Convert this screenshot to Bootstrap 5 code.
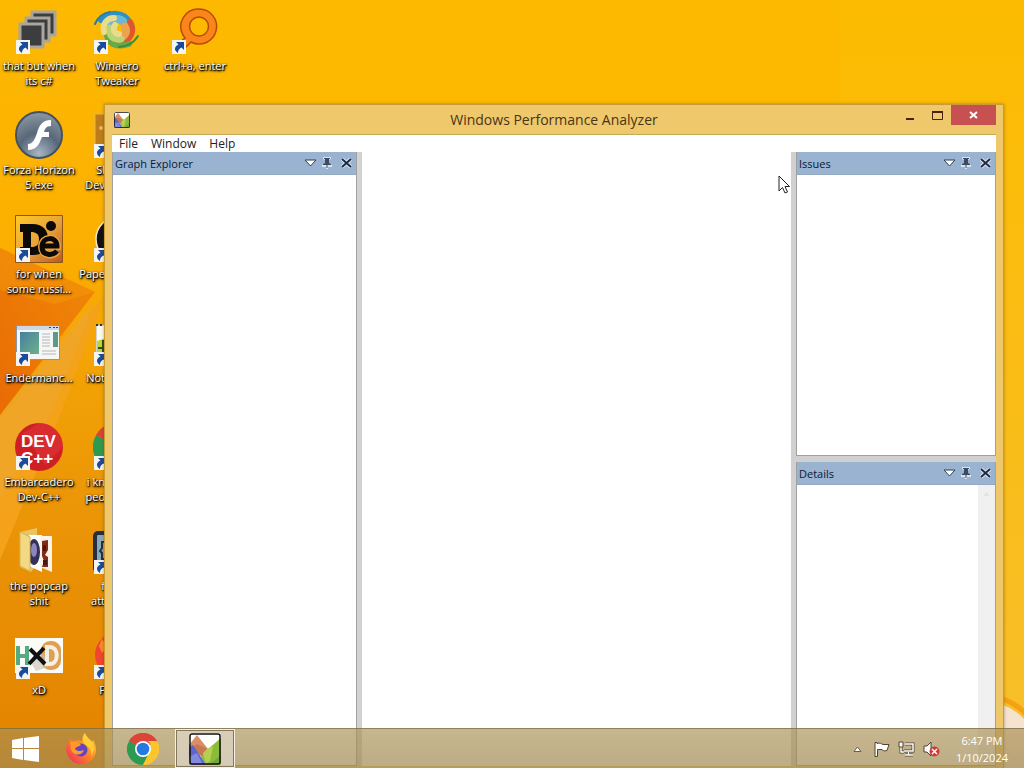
<!DOCTYPE html>
<html lang="en">
<head>
<meta charset="utf-8">
<meta name="viewport" content="width=device-width, initial-scale=1">
<title>Windows Performance Analyzer</title>
<link href="https://cdn.jsdelivr.net/npm/bootstrap@5.3.0/dist/css/bootstrap.min.css" rel="stylesheet">
<style>
  body { font-family: "Open Sans", "Noto Sans", sans-serif; font-size: 11px; line-height: 15px; color: #222; }
  .desktop { background: #ffb900; isolation: isolate; }
  .wallpaper { z-index: -1; }
  .icon-column { width: 78px; }
  .shortcut { height: 104px; padding-top: 7px; gap: 3px; color: #fff; white-space: nowrap; text-shadow: 1px 1px 1px #000, 0 1px 2px #000, 1px 1px 3px #000; }
  .shortcut:hover { color: #fff; }
  .shortcut svg { width: 48px; height: 48px; flex: none; }
  .tucked { width: 27px; overflow: hidden; text-align: right; }
  .tucked svg { margin-left: 15px; }
  .app-window { left: 104px; right: 20px; top: 104px; bottom: 0; background: #efc86c; padding: 0 7px 2px; border: 1px solid #c99a35; border-width: 1px 1px 0; box-shadow: 0 0 3px rgba(90,60,0,.45); }
  .title-bar { height: 29px; }
  .title-text { font-size: 14px; color: #4b3517; }
  .caption-btn { width: 27px; height: 20px; }
  .plain { border: 0; padding: 0; background: transparent; display: flex; align-items: center; justify-content: center; }
  .close-btn.plain { width: 45px; height: 20px; background: #c75050; }
  .client { border-top: 1px solid #c2ab5f; }
  .menu-bar { height: 17px; gap: 13px; padding-left: 7px; font-size: 12px; }
  .menu-bar button { color: #222; }
  .left-dock { width: 250px; border-right: 5px solid #d2d2d2; }
  .right-dock { width: 205px; border-left: 5px solid #d0d0d0; gap: 6px; background: #d0d0d0; }
  .pane { border: solid #a0a0a0; border-width: 0 1px 1px; background: #fff; flex-basis: 0; }
  .pane-head { height: 23px; background: #9ab3d1; color: #0b1836; padding: 0 4px 0 2px; border-bottom: 1px solid #93a9c0; }
  .pane-head h2 { font-size: 11px; line-height: 15px; font-weight: 400; margin: 0; }
  .pane-tools { gap: 5px; }
  .scroll-track { width: 17px; background: #f0f0f0; }
  .task-bar { height: 40px; background: linear-gradient(rgba(170,143,83,.66), rgba(160,138,82,.7)); border-top: 1px solid rgba(110,100,65,.6); }
  .task-slot { width: 62px; }
  .start-slot { width: 50px; }
  .active-slot { width: 60px; margin-left: 1px; border: 1px solid #f4f0e6; outline: 1px solid #84765b; outline-offset: -2px; background: rgba(222,213,197,.75); }
  .tray { gap: 8px; padding-right: 16px; }
  .clock { color: #fff; line-height: 17px; margin-left: 8px; }
  .pointer { left: 778px; top: 175px; z-index: 5; }
</style>
</head>
<body>
<svg width="0" height="0" class="position-absolute" aria-hidden="true">
  <defs>
    <symbol id="arrow" viewBox="0 0 14 14"><path fill="#f4f4f0" d="M0 0h14v14H0z"/><path fill="#1a4a9c" d="M4 2h8v8L9.500 7.500C7 9 6 10 6 13 1 10 3 6 6.500 4.500z"/></symbol>
    <symbol id="tri" viewBox="0 0 13 8"><path d="M1 1h11L6.500 7z" fill="#fff" stroke="#2b4258"/></symbol>
    <symbol id="pin" viewBox="0 0 10 12"><path d="M1 0h8v2L7 3v3l3 2v2H6v2H4v-2H0V8l3-2V3L1 2z" fill="#dbe5f0"/><path d="M2 1h6v1H7v4l2 1v1H5.500v3h-1V8H1V7l2-1V2H2z" fill="#3c4b5e"/></symbol>
    <symbol id="cross" viewBox="0 0 11 10"><path d="M1 1l9 8M10 1L1 9" stroke="#dce5f0" stroke-width="4"/><path d="M1 1l9 8M10 1L1 9" stroke="#1d2c45" stroke-width="2"/></symbol>
    <symbol id="peaks" viewBox="0 0 32 32"><clipPath id="pk"><rect width="32" height="32" rx="2"/></clipPath><g clip-path="url(#pk)"><path fill="#fff" d="M0 0h32v32H0z"/><path fill="#d98e69" d="M0 12L8 2l11 14-8 4L0 16z"/><path fill="#c9794f" d="M3 15l5-4 11 5-6 8z"/><path fill="#8cba3b" d="M12 24l7-8L32 5v27H17z"/><path fill="#b5cf52" d="M14 20l5-5 5-1-3 14-4 3z"/><path fill="#74a53a" d="M22 30l10-8v10H20z"/><path fill="#5c66cc" d="M0 14l4-2 10 15 3 5H0z"/><path fill="#8489e0" d="M0 24l8-4 6 12H0z"/></g><rect x="1" y="1" width="30" height="30" rx="2" fill="none" stroke="#111" stroke-width="1.500"/></symbol>
    <symbol id="chrome" viewBox="0 0 48 48"><path fill="#db4437" d="M24 24L3.200 12A24 24 0 0144.800 12z"/><path fill="#fbc52d" d="M24 24l20.800-12A24 24 0 0124 48z"/><path fill="#2c9a51" d="M24 48A24 24 0 013.200 12L24 24l8 8z"/><path fill="#db4437" d="M3.200 12A24 24 0 0144.800 12H24a12 12 0 00-10 6z"/><path fill="#fbc52d" d="M44.800 12A24 24 0 0124 48l10-18a12 12 0 00-3-18z"/><circle cx="24" cy="24" r="12" fill="#fff"/><circle cx="24" cy="24" r="9.500" fill="#2779e2"/></symbol>
    <symbol id="firefox" viewBox="0 0 32 32"><linearGradient id="ff" x1="1" y1="0" x2="0" y2="1"><stop stop-color="#ffe14a"/><stop offset=".45" stop-color="#ff8a22"/><stop offset="1" stop-color="#ed2565"/></linearGradient><path fill="url(#ff)" d="M20 0c1 4 5 6 7 9l1-2c3 5 4 10 2 15a15 15 0 01-28-1C0 14 2 10 4 8l0-3 4 3c3-1 6-1 9 0 0-3 1-6 3-8z"/><circle cx="16" cy="17" r="6.500" fill="#6544c4"/><path fill="#ff9a2a" d="M5 9c5-1 9 0 11 3-2 2-5 1-6 4 3 3 6 2 9 1-2 6-10 6-13 0z"/><path fill="#ffcf38" d="M20 0c1 4 5 6 7 9 3 5 2 10-1 14 1-6-1-8-5-11-4-2-4-8-1-12z"/></symbol>
  </defs>
</svg>

<div class="desktop position-relative vh-100 overflow-hidden">
  <svg class="wallpaper position-absolute top-0 start-0 w-100 h-100" viewBox="0 0 1024 768" preserveAspectRatio="none" aria-hidden="true">
    <defs>
      <linearGradient id="bg" x1="0" y1="0" x2="0" y2="1"><stop stop-color="#fdb900"/><stop offset=".3" stop-color="#fcb001"/><stop offset=".65" stop-color="#eb9607"/><stop offset="1" stop-color="#e48300"/></linearGradient>
      <linearGradient id="side" x1="0" y1="0" x2="0" y2="1"><stop stop-color="#fcbb00"/><stop offset="1" stop-color="#f8bf2c"/></linearGradient>
      <linearGradient id="fan" x1="1" y1="0" x2="0" y2="1"><stop stop-color="#f08a08"/><stop offset="1" stop-color="#e96b04"/></linearGradient>
    </defs>
    <path fill="url(#bg)" d="M0 0h1024v768H0z"/>
    <path fill="url(#side)" d="M600 0h424v768H600z" />
    <path fill="#fdb900" d="M200 0h640v104H200z"/>
    <path fill="#f3a21a" d="M105 295L60 415 0 560V420z"/>
    <path fill="#eea62d" d="M95 300L0 415v85l55-95z" opacity=".7"/>
    <path fill="url(#fan)" d="M0 248l95 44L0 415z"/>
    <path fill="#f49409" d="M0 248l95 44-40 12L0 290z" opacity=".6"/>
    <path fill="#f5e2cf" d="M1003 705q12 4 21 14v49h-21z"/>
    <path fill="none" stroke="#f5a114" stroke-width="5" d="M1000 698q14 4 26 16"/>
  </svg>

  <nav class="d-flex text-center" aria-label="Desktop shortcuts">
    <div class="icon-column">
      <a href="#" class="shortcut d-flex flex-column align-items-center text-decoration-none">
        <svg viewBox="0 0 48 48"><g fill="#3b3d3f" stroke="#aaa69d" stroke-width="3"><path d="M17 5h23v23H17z"/><path d="M11 11h23v23H11z"/><path d="M5 17h23v23H5z"/></g><use href="#arrow" x="1" y="33" width="14" height="14"/></svg>
        <span>that but when<br>its c#</span></a>
      <a href="#" class="shortcut d-flex flex-column align-items-center text-decoration-none">
        <svg viewBox="0 0 48 48"><radialGradient id="fl" cx=".5" cy=".9" r=".9"><stop stop-color="#a7b6c4"/><stop offset=".5" stop-color="#596879"/><stop offset="1" stop-color="#8b98a4"/></radialGradient><circle cx="24" cy="24" r="23" fill="url(#fl)" stroke="#45515f" stroke-width="2"/><path fill="#fff" d="M36 9v6c-5 0-6 3-7 6h5v5h-7c-3 8-6 13-14 13v-6c5 0 7-5 9-11 2-7 5-13 14-13z"/></svg>
        <span>Forza Horizon<br>5.exe</span></a>
      <a href="#" class="shortcut d-flex flex-column align-items-center text-decoration-none">
        <svg viewBox="0 0 48 48"><linearGradient id="de" x1="0" y1="0" x2="1" y2="1"><stop stop-color="#ffc928"/><stop offset=".5" stop-color="#e9a53c"/><stop offset="1" stop-color="#bd571d"/></linearGradient><path fill="url(#de)" stroke="#8e5418" d="M.5.5h47v47H.5z"/><path fill="#0c0908" fill-rule="evenodd" d="M5 9h12c12 0 16 7 16 15 0 10-5 16-15 16H5V32h3V17H5zM16 17v15c6 0 8-2 8-8 0-5-3-7-8-7z"/><circle cx="36" cy="11" r="5" fill="#0c0908"/><path fill="none" stroke="#e9a53c" stroke-width="8" d="M27 31h15c0-10-15-10-15 1 0 9 11 9 15 4"/><path fill="none" stroke="#0c0908" stroke-width="5" d="M27 31h15c0-10-15-10-15 1 0 9 11 9 15 4"/><use href="#arrow" x="1" y="33" width="14" height="14"/></svg>
        <span>for when<br>some russi...</span></a>
      <a href="#" class="shortcut d-flex flex-column align-items-center text-decoration-none">
        <svg viewBox="0 0 48 48"><linearGradient id="en" x1="0" y1="0" x2="1" y2="1"><stop stop-color="#4380a0"/><stop offset="1" stop-color="#6fb08b"/></linearGradient><path fill="#f6f6f4" stroke="#8796ab" d="M1.500 6.500h43v34h-43z"/><path fill="#cdd7e5" d="M2 7h42v4H2z"/><path fill="#32446c" d="M34 8h2v1h-2zM38 8h2v1h-2zM41 8h2v1h-2z"/><path fill="url(#en)" d="M5 13h19v22H5z"/><path fill="#5c9987" d="M38 13h5v15h-5z"/><path stroke="#b4b6ba" d="M27 15h8M27 18h8M27 21h8M27 24h8M27 27h8M27 32h14M27 35h14"/><use href="#arrow" x="1" y="33" width="14" height="14"/></svg>
        <span>Endermanc...</span></a>
      <a href="#" class="shortcut d-flex flex-column align-items-center text-decoration-none">
        <svg viewBox="0 0 48 48"><circle cx="24" cy="24" r="24" fill="#cf1f24"/><path d="M24 0a24 24 0 0124 24L30 42 8 10z" fill="#e3393b" opacity=".5"/><g fill="#fff" font-family="Liberation Sans" font-weight="700" font-size="17" style="text-shadow:none"><text x="6" y="24">DEV</text><text x="6" y="41">C++</text></g><use href="#arrow" x="1" y="33" width="14" height="14"/></svg>
        <span>Embarcadero<br>Dev-C++</span></a>
      <a href="#" class="shortcut d-flex flex-column align-items-center text-decoration-none">
        <svg viewBox="0 0 48 48"><path fill="#e7c566" d="M5 5l17-4v36l-6 8L5 40z"/><path fill="#fff" d="M14 8h13v37l-13-6z"/><ellipse cx="19" cy="25" rx="6" ry="13" fill="#343158"/><ellipse cx="19" cy="23" rx="3" ry="7" fill="#8b86bd"/><path fill="#fbf3ea" d="M25 9h12v36l-12-5z"/><path fill="#812c16" d="M27 14l6-1v10l-3 5 3 2v10h-6l2-6-2-5z"/><path fill="#4a1a10" d="M28 18h3v6h-3zM28 33h4v5h-4z"/><path fill="#f4d985" stroke="#d7b457" d="M5 5l10 5v34L5 39z"/></svg>
        <span>the popcap<br>shit</span></a>
      <a href="#" class="shortcut d-flex flex-column align-items-center text-decoration-none">
        <svg viewBox="0 0 48 48"><path fill="#fbfbf8" d="M0 7h48v35H0z"/><path d="M3 15v19M12 15v19M3 25h9" stroke="#55aa82" stroke-width="4"/><rect x="26" y="10" width="20" height="29" rx="9" fill="#e0a050"/><path fill="#c6c0b4" d="M15 30l14-8 4 14-12 4z" opacity=".6"/><path fill="none" stroke="#f3efe9" stroke-width="4" d="M32 16v17h3c9 0 9-17 0-17z"/><path d="M15 18l15 15M29 17L14 33" stroke="#111" stroke-width="4"/><use href="#arrow" x="1" y="34" width="14" height="14"/></svg>
        <span>xD</span></a>
    </div>
    <div class="icon-column">
      <a href="#" class="shortcut d-flex flex-column align-items-center text-decoration-none">
        <svg viewBox="0 0 48 48"><g fill="none" stroke-linecap="round"><path stroke="#2f91c2" stroke-width="6" d="M8 13C16 4 32 5 36 15"/><path stroke="#68b8d8" stroke-width="8" d="M17 15c8-6 15-2 16 6"/><path stroke="#db5730" stroke-width="6" d="M37 15c5 8 1 17-7 20"/><path stroke="#f0a14b" stroke-width="7" d="M32 19c4 7-1 12-7 12"/><path stroke="#68a947" stroke-width="6" d="M36 37c-12 4-20 0-22-8"/><path stroke="#b9d375" stroke-width="7" d="M28 32c-8 1-12-3-11-11"/><path stroke="#e9dc8d" stroke-width="6" d="M11 25c-2-8 3-14 10-14M22 18c-3 5 0 9 4 9"/><path stroke="#2b7da8" stroke-width="2" d="M2 17c3-7 8-11 15-12"/><path stroke="#3c8b45" stroke-width="2" d="M45 29c-5 8-11 10-19 11"/></g><use href="#arrow" x="1" y="33" width="14" height="14"/></svg>
        <span>Winaero<br>Tweaker</span></a>
      <a href="#" class="shortcut tucked d-flex flex-column align-items-end text-decoration-none">
        <svg class="align-self-start" viewBox="0 0 48 48"><path fill="#bd7d1b" stroke="#e4b65b" d="M2 3h44v42H2z"/><circle cx="8" cy="17" r="2" fill="#e5b869"/><use href="#arrow" x="1" y="33" width="14" height="14"/></svg>
        <span>Sl<br>Dev</span></a>
      <a href="#" class="shortcut tucked d-flex flex-column align-items-end text-decoration-none">
        <svg class="align-self-start" viewBox="0 0 48 48"><circle cx="25" cy="24" r="22" fill="#111" stroke="#f5e8cf" stroke-width="1.500"/><use href="#arrow" x="1" y="33" width="14" height="14"/></svg>
        <span>Pape</span></a>
      <a href="#" class="shortcut tucked d-flex flex-column align-items-end text-decoration-none">
        <svg class="align-self-start" viewBox="0 0 48 48"><path fill="#fafaf2" stroke="#aaa" d="M3 6h40v38H3z"/><path stroke="#333" stroke-width="2" stroke-dasharray="2 2" d="M3 6h40"/><path fill="#b4db32" d="M4 22l14-5v25H4z"/><path stroke="#344818" stroke-width="2" d="M5 29h8M10 21v15"/><use href="#arrow" x="1" y="33" width="14" height="14"/></svg>
        <span>Not</span></a>
      <a href="#" class="shortcut tucked d-flex flex-column align-items-end text-decoration-none">
        <svg class="align-self-start" viewBox="0 0 48 48"><use href="#chrome" width="48" height="48"/><use href="#arrow" x="1" y="33" width="14" height="14"/></svg>
        <span>i kn<br>peo</span></a>
      <a href="#" class="shortcut tucked d-flex flex-column align-items-end text-decoration-none">
        <svg class="align-self-start" viewBox="0 0 48 48"><rect x="2" y="6" width="44" height="38" rx="3" fill="#86a9bd" stroke="#252f3d" stroke-width="4"/><path fill="none" stroke="#252f3d" stroke-width="2" d="M13 15H9v6l-2 3 2 2v6h4"/><use href="#arrow" x="1" y="33" width="14" height="14"/></svg>
        <span>f<br>att</span></a>
      <a href="#" class="shortcut tucked d-flex flex-column align-items-end text-decoration-none">
        <svg class="align-self-start" viewBox="0 0 48 48"><circle cx="25" cy="24" r="23" fill="#f2452f"/><path fill="#ff8b26" d="M6 15l3-7 5 8-5 6z"/><use href="#arrow" x="1" y="34" width="14" height="14"/></svg>
        <span>F</span></a>
    </div>
    <div class="icon-column">
      <a href="#" class="shortcut d-flex flex-column align-items-center text-decoration-none">
        <svg viewBox="0 0 48 48"><path fill="#f9851b" stroke="#b84c08" stroke-width="1.500" fill-rule="evenodd" d="M28 2a17.500 17.500 0 11-8 33L11 44l-7-5 10-8 -2-3A17.500 17.500 0 0128 2zm0 8a9.500 9.500 0 100 19 9.500 9.500 0 000-19z"/><use href="#arrow" x="1" y="33" width="14" height="14"/></svg>
        <span>ctrl+a, enter</span></a>
    </div>
  </nav>

  <main class="app-window position-absolute d-flex flex-column">
    <header class="title-bar d-flex flex-shrink-0 position-relative justify-content-between">
      <svg class="align-self-center ms-0" width="20" height="16" viewBox="-2 0 20 16" aria-hidden="true"><use href="#peaks" width="16" height="16"/></svg>
      <h1 class="title-text position-absolute top-50 start-50 translate-middle m-0 fw-normal text-nowrap">Windows Performance Analyzer</h1>
      <div class="d-flex">
        <button class="plain caption-btn" aria-label="Minimize"><svg width="9" height="12"><path fill="#4a2109" d="M0 9h8v2H0z"/></svg></button>
        <button class="plain caption-btn" aria-label="Maximize"><svg width="11" height="9"><path fill="none" stroke="#4a2109" d="M.5 1h10v7.500H.5z"/><path fill="#4a2109" d="M0 0h11v2H0z"/></svg></button>
        <button class="plain close-btn" aria-label="Close"><svg width="9" height="8"><path stroke="#fff" stroke-width="2" d="M1 1l7 6M8 1L1 7"/></svg></button>
      </div>
    </header>
    <div class="client bg-white d-flex flex-column flex-grow-1">
      <nav class="menu-bar d-flex flex-shrink-0">
        <button class="plain">File</button><button class="plain">Window</button><button class="plain">Help</button>
      </nav>
      <div class="d-flex flex-grow-1">
        <aside class="left-dock d-flex flex-column">
          <section class="pane flex-grow-1">
            <div class="pane-head d-flex align-items-center justify-content-between"><h2>Graph Explorer</h2>
              <div class="pane-tools d-flex"><button class="plain" aria-label="Menu"><svg width="13" height="8"><use href="#tri"/></svg></button><button class="plain" aria-label="Pin"><svg width="10" height="12"><use href="#pin"/></svg></button><button class="plain ms-1" aria-label="Close pane"><svg width="11" height="10"><use href="#cross"/></svg></button></div></div>
          </section>
        </aside>
        <div class="flex-grow-1"></div>
        <aside class="right-dock d-flex flex-column">
          <section class="pane flex-grow-1">
            <div class="pane-head d-flex align-items-center justify-content-between"><h2>Issues</h2>
              <div class="pane-tools d-flex"><button class="plain" aria-label="Menu"><svg width="13" height="8"><use href="#tri"/></svg></button><button class="plain" aria-label="Pin"><svg width="10" height="12"><use href="#pin"/></svg></button><button class="plain ms-1" aria-label="Close pane"><svg width="11" height="10"><use href="#cross"/></svg></button></div></div>
          </section>
          <section class="pane flex-grow-1 d-flex flex-column">
            <div class="pane-head d-flex flex-shrink-0 align-items-center justify-content-between"><h2>Details</h2>
              <div class="pane-tools d-flex"><button class="plain" aria-label="Menu"><svg width="13" height="8"><use href="#tri"/></svg></button><button class="plain" aria-label="Pin"><svg width="10" height="12"><use href="#pin"/></svg></button><button class="plain ms-1" aria-label="Close pane"><svg width="11" height="10"><use href="#cross"/></svg></button></div></div>
            <div class="scroll-track flex-grow-1 ms-auto text-center"><svg width="7" height="4" aria-hidden="true"><path fill="#e2e2e2" d="M0 4l3.500-4L7 4z"/></svg></div>
          </section>
        </aside>
      </div>
    </div>
  </main>

  <footer class="task-bar position-absolute bottom-0 start-0 end-0 d-flex">
    <button class="plain start-slot" aria-label="Start"><svg width="27" height="26" viewBox="0 0 27 26"><path fill="#fff" d="M0 4l11-2v10H0zM12 2l15-2v12H12zM0 13h11v11L0 22zM12 13h15v13l-15-2z"/></svg></button>
    <button class="plain task-slot" aria-label="Firefox"><svg width="32" height="32"><use href="#firefox"/></svg></button>
    <button class="plain task-slot" aria-label="Chrome"><svg width="32" height="32"><use href="#chrome"/></svg></button>
    <button class="plain active-slot" aria-label="Windows Performance Analyzer"><svg width="32" height="32"><use href="#peaks"/></svg></button>
    <div class="tray d-flex align-items-center ms-auto">
      <button class="plain me-1" aria-label="Show hidden icons"><svg width="9" height="6"><path fill="#fff" stroke="#6d6044" d="M1 5.500l3.500-4.500L8 5.500z"/></svg></button>
      <button class="plain" aria-label="Action Center"><svg width="16" height="16"><path fill="#fff" stroke="#50452c" d="M1 1.500h2v1c3-1 4 0 6 1h6l-2 6c-3 1-4 0-5-1H3.500v7H1z"/></svg></button>
      <button class="plain" aria-label="Network"><svg width="17" height="16"><path fill="none" stroke="#50452c" stroke-width="3" d="M7 3h8v7H6M10.500 11v3M7 14h8M3 6v5h3"/><path fill="none" stroke="#fff" stroke-width="1.500" d="M7 3h8v7H6M10.500 11v3M7 14h8M3 6v5h3"/><path fill="#fff" stroke="#50452c" d="M1 1h4v5H1z"/></svg></button>
      <button class="plain" aria-label="Volume muted"><svg width="17" height="16"><path fill="#fff" stroke="#50452c" d="M1 5h3l4-4v14l-4-4H1z"/><circle cx="11.500" cy="10.500" r="5" fill="#d23b33"/><path stroke="#fff" stroke-width="1.500" d="M9 8l5 5M14 8l-5 5"/></svg></button>
      <button class="plain clock d-block text-center" aria-label="Clock">6:47 PM<br>1/10/2024</button>
    </div>
  </footer>

  <svg class="pointer position-absolute" width="13" height="20" aria-hidden="true"><path fill="#fff" stroke="#222" d="M1 1v15l3.500-3.500L7 18l2.500-1L7 11.500h4.500z"/></svg>
</div>
<script src="https://cdn.jsdelivr.net/npm/bootstrap@5.3.0/dist/js/bootstrap.bundle.min.js"></script>
</body>
</html>
